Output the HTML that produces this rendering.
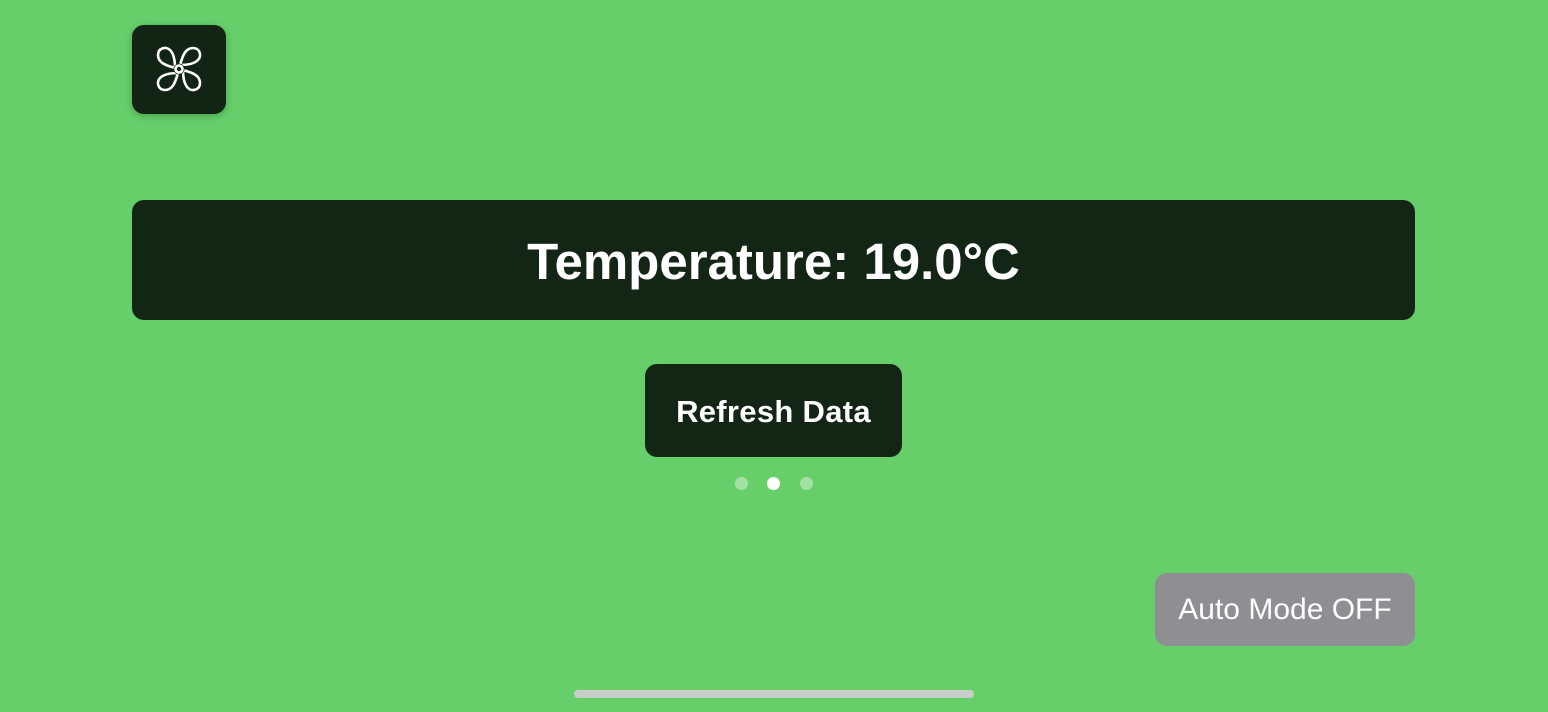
<!DOCTYPE html>
<html><head><style>
html,body{margin:0;padding:0;width:1548px;height:712px;overflow:hidden;background:#67cf6a;font-family:"Liberation Sans",sans-serif;}
.abs{position:absolute;}
.fan{left:132px;top:25px;width:94px;height:89px;background:#122515;border-radius:12px;box-shadow:0 2px 8px rgba(0,0,0,.25);}
.temp{left:132px;top:200px;width:1283px;height:120px;background:#132615;border-radius:12px;color:#fff;font-weight:bold;font-size:51px;display:flex;align-items:center;justify-content:center;padding-top:2px;box-sizing:border-box;}
.btn{left:645px;top:364px;width:257px;height:93px;background:#132615;border-radius:12px;color:#fff;font-weight:bold;font-size:31px;letter-spacing:0.3px;display:flex;align-items:center;justify-content:center;padding-top:2px;box-sizing:border-box;}
.dot{width:13px;height:13px;border-radius:50%;top:477px;background:rgba(255,255,255,.4);}
.auto{left:1155px;top:573px;width:260px;height:73px;background:#8e8e93;border-radius:12px;color:#fff;font-size:30px;display:flex;align-items:center;justify-content:center;}
.bar{left:574px;top:690px;width:400px;height:8px;border-radius:4px;background:#c9cdc9;}
</style></head><body>
<div class="abs fan">
<svg width="94" height="89" viewBox="0 0 94 89">
<g transform="translate(47,44)" fill="none" stroke="#fff" stroke-width="2.6" stroke-linejoin="round">
<path id="p" d="M-4,-1 C-10,-3 -21,-5 -21,-14 C-21,-21 -13,-23 -9,-19 C-5,-15 -4,-8 -4,-1Z"/>
<path d="M-4,-1 C-10,-3 -21,-5 -21,-14 C-21,-21 -13,-23 -9,-19 C-5,-15 -4,-8 -4,-1Z" transform="rotate(90)"/>
<path d="M-4,-1 C-10,-3 -21,-5 -21,-14 C-21,-21 -13,-23 -9,-19 C-5,-15 -4,-8 -4,-1Z" transform="rotate(180)"/>
<path d="M-4,-1 C-10,-3 -21,-5 -21,-14 C-21,-21 -13,-23 -9,-19 C-5,-15 -4,-8 -4,-1Z" transform="rotate(270)"/>
<circle cx="0" cy="0" r="5.5" fill="#122515" stroke="none"/>
<circle cx="0" cy="0" r="3.5"/>
</g></svg>
</div>
<div class="abs temp">Temperature: 19.0°C</div>
<div class="abs btn">Refresh Data</div>
<div class="abs dot" style="left:735px"></div>
<div class="abs dot" style="left:767px;background:#fff"></div>
<div class="abs dot" style="left:800px"></div>
<div class="abs auto">Auto Mode OFF</div>
<div class="abs bar"></div>
</body></html>
